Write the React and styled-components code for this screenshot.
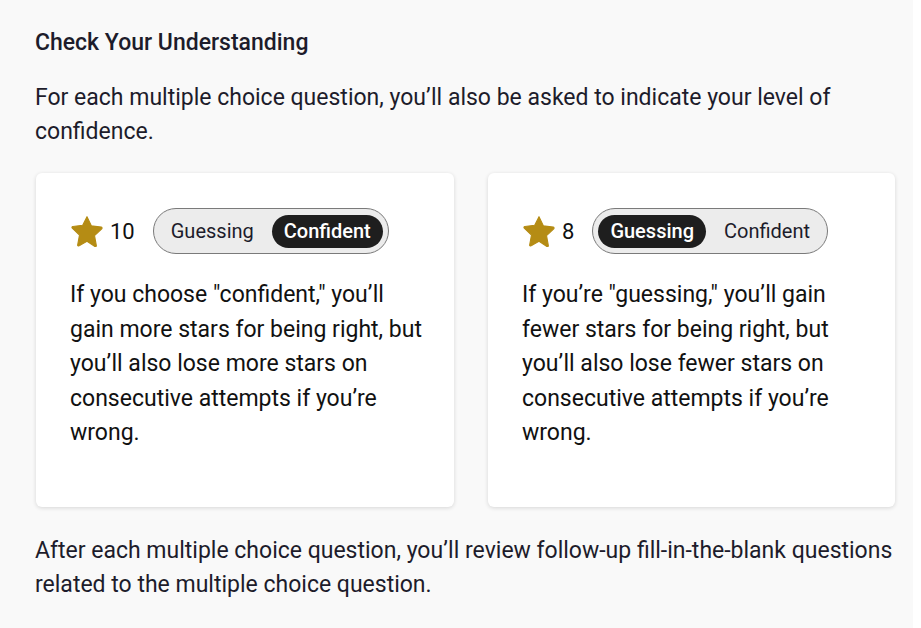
import React from "react";
import styled, { createGlobalStyle } from "styled-components";

const GlobalStyle = createGlobalStyle`
  body {
    margin: 0;
    background: #ffffff;
    font-family: Roboto, "Liberation Sans", sans-serif;
  }
`;

const cards = [
  {
    stars: 10,
    choice: "Confident",
    text: 'If you choose "confident," you\u2019ll gain more stars for being right, but you\u2019ll also lose more stars on consecutive attempts if you\u2019re wrong.',
  },
  {
    stars: 8,
    choice: "Guessing",
    text: 'If you\u2019re "guessing," you\u2019ll gain fewer stars for being right, but you\u2019ll also lose fewer stars on consecutive attempts if you\u2019re wrong.',
  },
];

function Star() {
  return (
    <svg width="34" height="32" viewBox="0 0 24 23">
      <path
        d="M12 1.2l3.1 6.6 7.1.9c.6.1.8.8.4 1.2l-5.2 4.9 1.3 7.1c.1.6-.5 1-1 .7L12 18.9l-5.7 3.3c-.5.3-1.1-.1-1-.7l1.3-7.1-5.2-4.9c-.4-.4-.2-1.1.4-1.2l7.1-.9L12 1.2z"
        fill="#b58c14"
        stroke="#b58c14"
        strokeWidth="0.8"
        strokeLinejoin="round"
      />
    </svg>
  );
}

export default function App() {
  return (
    <Page>
      <GlobalStyle />
      <Heading>Check Your Understanding</Heading>
      <Para>
        For each multiple choice question, you’ll also be asked to indicate your
        level of confidence.
      </Para>

      <CardGrid>
        {cards.map((c) => (
          <Card key={c.stars}>
            <ScoreRow>
              <Star />
              <Count>{c.stars}</Count>
              <Toggle>
                <Option active={c.choice === "Guessing"}>Guessing</Option>
                <Option active={c.choice === "Confident"}>Confident</Option>
              </Toggle>
            </ScoreRow>
            <CardText>{c.text}</CardText>
          </Card>
        ))}
      </CardGrid>

      <Para>
        After each multiple choice question, you’ll review follow-up
        fill-in-the-blank questions related to the multiple choice question.
      </Para>
    </Page>
  );
}

const Page = styled.div`
  width: 913px;
  min-height: 628px;
  box-sizing: border-box;
  background: #f9f9f9;
  padding: 28px 20px 20px 35px;
  color: #1d1c2b;
`;

const Heading = styled.h2`
  margin: 0 0 23px;
  font-size: 23px;
  line-height: 30px;
  font-weight: 500;
`;

const Para = styled.p`
  margin: 0;
  font-size: 23px;
  line-height: 34px;
`;

const CardGrid = styled.div`
  display: grid;
  grid-template-columns: 418fr 407fr;
  gap: 34px;
  margin: 24px 0 27px 1px;
  width: 859px;
`;

const Card = styled.div`
  background: #ffffff;
  border-radius: 6px;
  box-shadow: 0 1px 4px rgba(0, 0, 0, 0.14);
  padding: 35px 30px 56px 34px;
`;

const ScoreRow = styled.div`
  display: flex;
  align-items: center;
  gap: 6px;
  margin-bottom: 24px;
`;

const Count = styled.span`
  font-size: 22px;
  color: #111;
  margin-right: 12px;
`;

const Toggle = styled.div`
  display: flex;
  align-items: center;
  height: 46px;
  box-sizing: border-box;
  padding: 0 5px;
  border: 1px solid #7a7a7a;
  border-radius: 23px;
  background: #ececec;
`;

const Option = styled.span`
  display: flex;
  align-items: center;
  height: 33px;
  padding: 0 12px;
  border-radius: 17px;
  font-size: 20px;
  font-weight: ${(p) => (p.active ? 500 : 400)};
  color: ${(p) => (p.active ? "#ffffff" : "#1d1c2b")};
  background: ${(p) => (p.active ? "#1e1e1e" : "transparent")};
  & + & {
    margin-left: 6px;
  }
`;

const CardText = styled.p`
  margin: 0;
  font-size: 23px;
  line-height: 34.5px;
  color: #111;
`;
